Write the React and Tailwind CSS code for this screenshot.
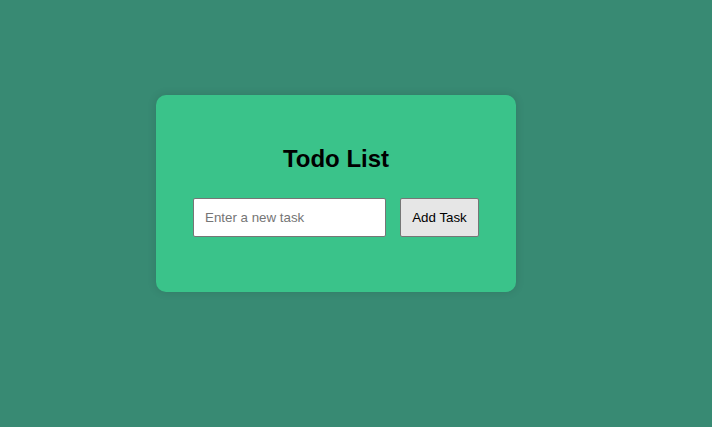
import React, { useState } from "react";

export default function App() {
  const [task, setTask] = useState("");
  const [tasks, setTasks] = useState([]);

  const addTask = () => {
    if (!task.trim()) return;
    setTasks([...tasks, task]);
    setTask("");
  };

  return (
    <div className="min-h-screen bg-[#388a73] flex items-center justify-center pr-[40px] pb-[40px] font-['Liberation_Sans',Arial,sans-serif]">
      <div className="w-[360px] bg-[#3ac38a] rounded-[10px] shadow-[0_0_10px_rgba(0,0,0,0.12)] pt-[50px] pb-[55px] flex flex-col items-center">
        <h2 className="text-[24px] leading-[28px] font-bold text-black">Todo List</h2>
        <div className="flex gap-[14px] mt-[25px]">
          <input
            type="text"
            value={task}
            onChange={(e) => setTask(e.target.value)}
            placeholder="Enter a new task"
            className="w-[193px] h-[39px] bg-white border border-[#767676] rounded-[2px] px-[11px] text-[13.33px] text-black placeholder:text-[#757575] outline-none"
          />
          <button
            onClick={addTask}
            className="w-[79px] h-[39px] bg-[#e6e6e6] border border-[#767676] rounded-[2px] text-[13.33px] text-black"
          >
            Add Task
          </button>
        </div>
        {tasks.length > 0 && (
          <ul className="mt-4 text-sm">
            {tasks.map((t, i) => (
              <li key={i}>{t}</li>
            ))}
          </ul>
        )}
      </div>
    </div>
  );
}
